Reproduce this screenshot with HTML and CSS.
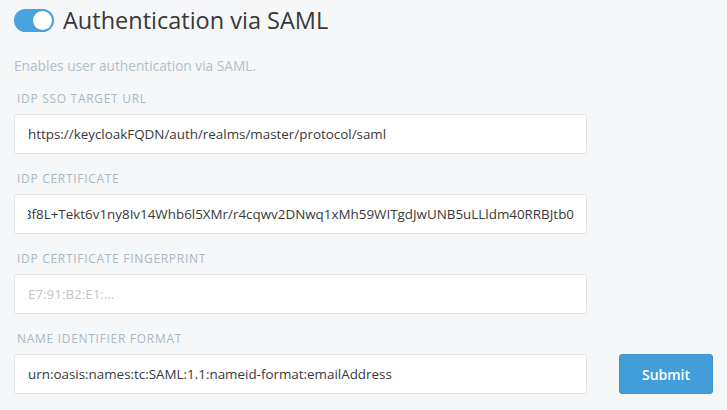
FILE: index.html
```html
<!DOCTYPE html>
<html lang="en">
<head>
<meta charset="utf-8">
<title>Authentication via SAML</title>
<link rel="stylesheet" href="styles.css">
</head>
<body>
<main class="page">
  <header class="header">
    <label class="switch">
      <input type="checkbox" checked>
      <span class="switch-track"><span class="switch-knob"></span></span>
    </label>
    <h1 class="title">Authentication via SAML</h1>
  </header>
  <p class="description">Enables user authentication via SAML.</p>
  <form class="form">
    <div class="fields">
      <div class="field">
        <label class="field-label">IDP SSO Target URL</label>
        <input class="field-input" type="text" value="https://keycloakFQDN/auth/realms/master/protocol/saml">
      </div>
      <div class="field">
        <label class="field-label">IDP Certificate</label>
        <input class="field-input field-input--end" type="text" value="MIICmzCCAYMCBgF1q8Xk:8Bf8L+Tekt6v1ny8Iv14Whb6l5XMr/r4cqwv2DNwq1xMh59WITgdJwUNB5uLLldm40RRBJtb0">
      </div>
      <div class="field">
        <label class="field-label">IDP Certificate Fingerprint</label>
        <input class="field-input" type="text" placeholder="E7:91:B2:E1:...">
      </div>
      <div class="field">
        <label class="field-label">Name Identifier Format</label>
        <input class="field-input" type="text" value="urn:oasis:names:tc:SAML:1.1:nameid-format:emailAddress">
      </div>
    </div>
    <button class="submit" type="button">Submit</button>
  </form>
</main>
</body>
</html>
```

FILE: styles.css
```css
* { box-sizing: border-box; }

html, body {
  margin: 0;
  padding: 0;
  background: #f6f7f9;
}

body {
  font-family: "Open Sans", "Noto Sans", "Liberation Sans", sans-serif;
  color: #38393b;
}

.page {
  padding: 0 14px;
}

.header {
  display: flex;
  align-items: center;
  gap: 9px;
  height: 40px;
}

.switch {
  display: flex;
  position: relative;
}

.switch input {
  position: absolute;
  opacity: 0;
  width: 0;
  height: 0;
}

.switch-track {
  width: 40px;
  height: 23px;
  border-radius: 12px;
  background: #48a2dc;
  display: flex;
  align-items: center;
  justify-content: flex-end;
  padding: 0 2px;
}

.switch-knob {
  width: 19px;
  height: 19px;
  border-radius: 50%;
  background: #ffffff;
}

.title {
  margin: 0;
  font-size: 23.5px;
  font-weight: 400;
  line-height: 40px;
  color: #36383a;
}

.description {
  margin: 16px 0 13px;
  font-size: 13.7px;
  line-height: 20px;
  color: #b2bfc8;
}

.form {
  display: flex;
  align-items: flex-end;
  gap: 32px;
}

.fields {
  width: 573px;
  display: flex;
  flex-direction: column;
  gap: 15px;
}

.field {
  display: flex;
  flex-direction: column;
  gap: 5px;
}

.field-label {
  padding-left: 3px;
  font-size: 12px;
  line-height: 20px;
  letter-spacing: 0.7px;
  text-transform: uppercase;
  color: #a9b9c3;
}

.field-input {
  height: 40px;
  width: 100%;
  padding: 0 12px 0 13px;
  border: 1px solid #e3e4e5;
  border-radius: 3px;
  background: #ffffff;
  font-family: inherit;
  font-size: 13.4px;
  color: #38393b;
  outline: none;
}

.field-input--end {
  direction: rtl;
}

.field-input::placeholder {
  color: #c3c7ca;
}

.submit {
  width: 94px;
  height: 40px;
  border: 1px solid #3d94cd;
  border-radius: 3px;
  background: #429ed8;
  color: #ffffff;
  font-family: inherit;
  font-size: 14px;
  font-weight: 600;
}
```
